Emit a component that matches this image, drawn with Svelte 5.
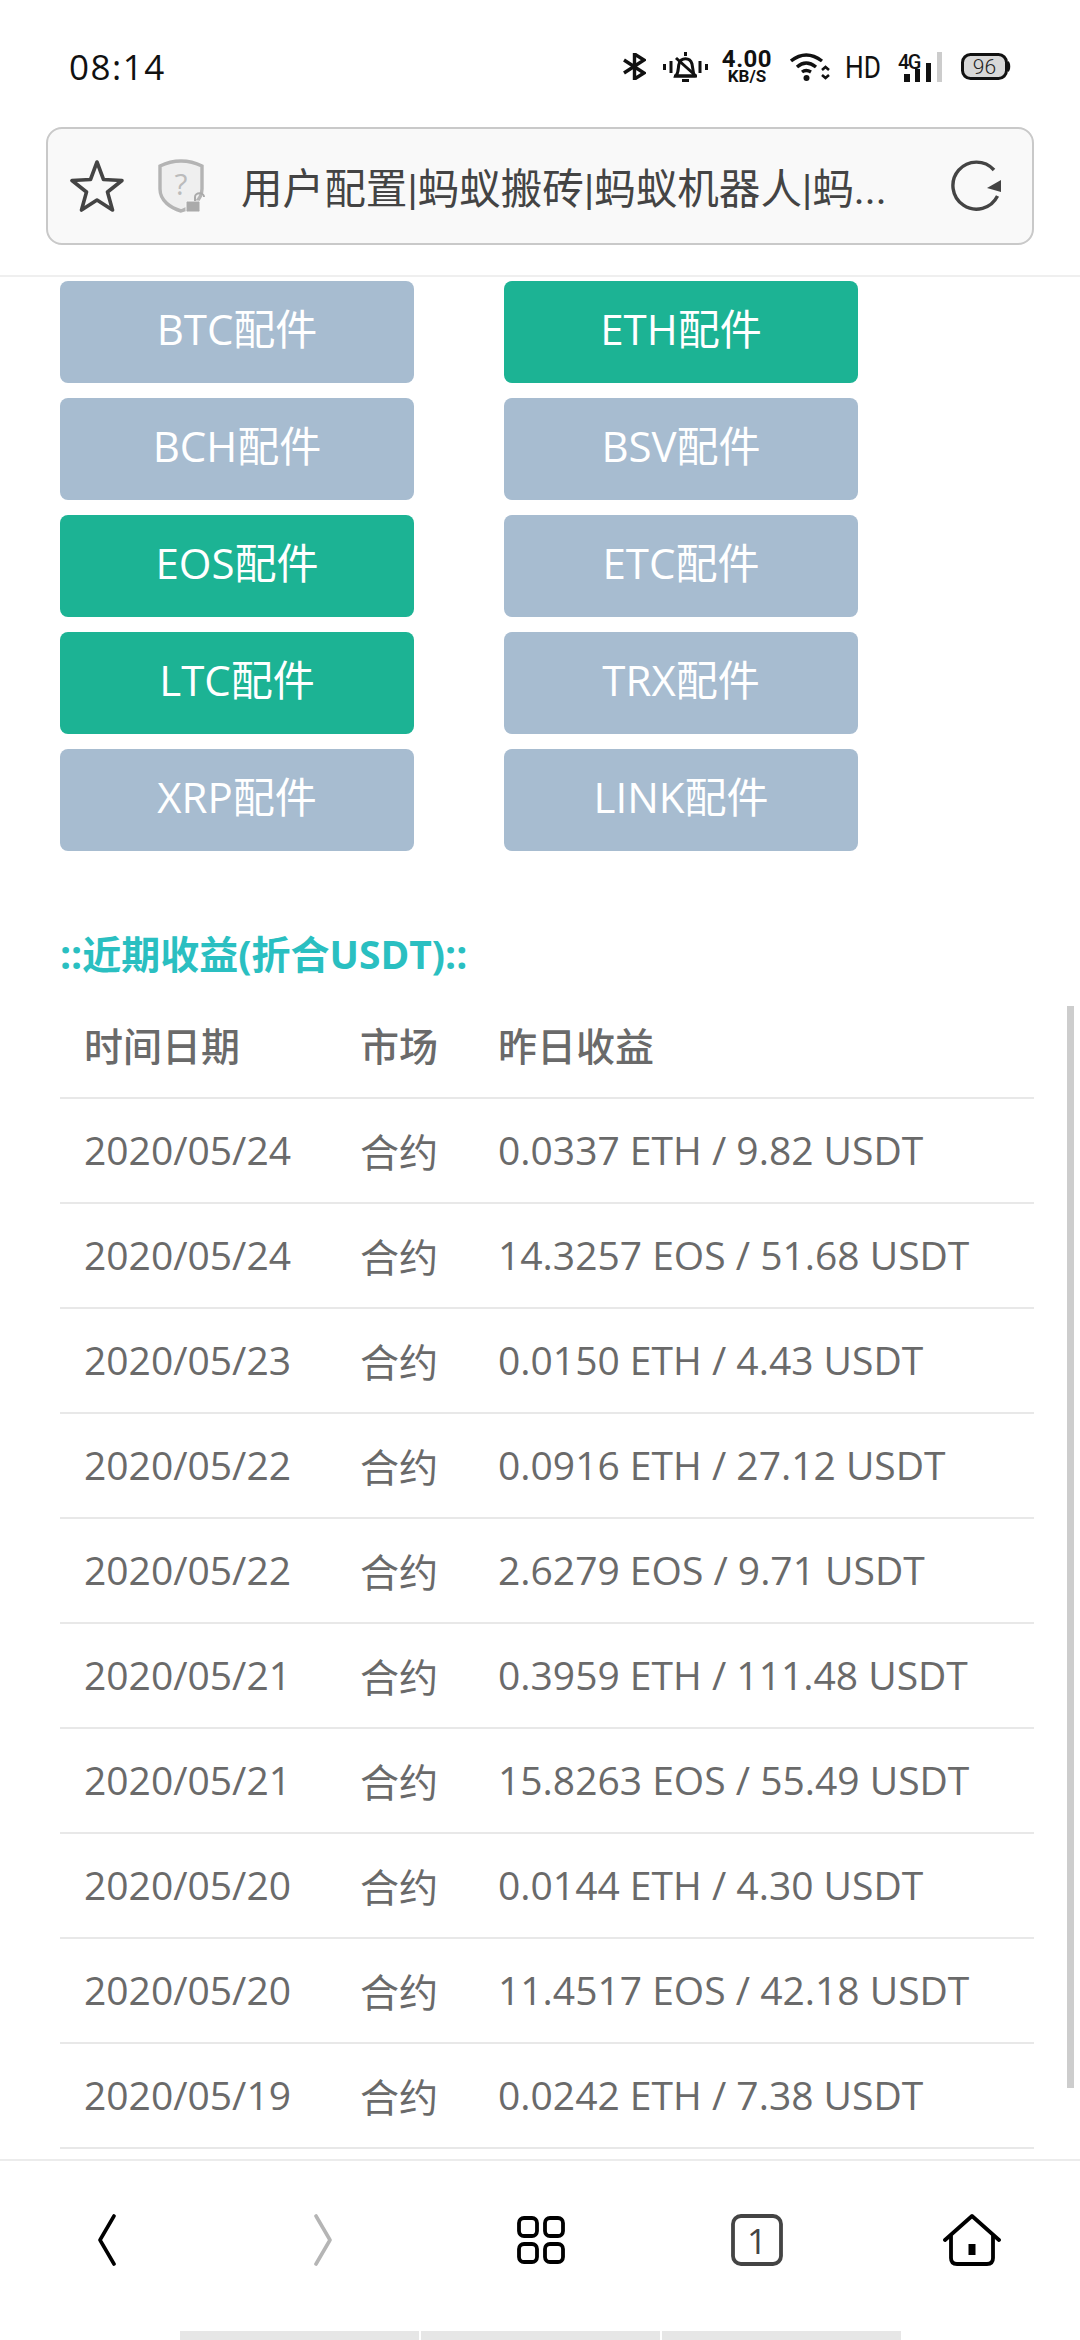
<script lang="ts">
	// Buttons on the config list; "on" ones are green
	const parts = [
		{ name: 'BTC配件', on: false },
		{ name: 'ETH配件', on: true },
		{ name: 'BCH配件', on: false },
		{ name: 'BSV配件', on: false },
		{ name: 'EOS配件', on: true },
		{ name: 'ETC配件', on: false },
		{ name: 'LTC配件', on: true },
		{ name: 'TRX配件', on: false },
		{ name: 'XRP配件', on: false },
		{ name: 'LINK配件', on: false }
	];

	const rows = [
		['2020/05/24', '0.0337 ETH / 9.82 USDT'],
		['2020/05/24', '14.3257 EOS / 51.68 USDT'],
		['2020/05/23', '0.0150 ETH / 4.43 USDT'],
		['2020/05/22', '0.0916 ETH / 27.12 USDT'],
		['2020/05/22', '2.6279 EOS / 9.71 USDT'],
		['2020/05/21', '0.3959 ETH / 111.48 USDT'],
		['2020/05/21', '15.8263 EOS / 55.49 USDT'],
		['2020/05/20', '0.0144 ETH / 4.30 USDT'],
		['2020/05/20', '11.4517 EOS / 42.18 USDT'],
		['2020/05/19', '0.0242 ETH / 7.38 USDT']
	];
</script>

<div class="page">
	<header class="status">
		<span class="time">08:14</span>
		<div class="status-icons">
			<svg width="23" height="27" viewBox="0 0 23 27" fill="none" stroke="#111" stroke-width="3.4">
				<path d="M1 7 L21 20 L11.5 26 V1 L21 7 L1 20" />
			</svg>
			<svg width="45" height="30" viewBox="0 0 45 30" fill="none" stroke="#111" stroke-width="3">
				<path d="M1.5 12 V18 M8 9 V21 M37 9 V21 M43.5 12 V18" />
				<path d="M22.5 0 V4 M13 24 C16 20 15 15 16 12 C18 5 27 5 29 12 L31 24 Z" />
				<path d="M11 24 H34 M19 28.5 H26 M13 6 L33 24" />
			</svg>
			<div class="speed">
				<span class="speed-num">4.00</span>
				<span class="speed-unit">KB/S</span>
			</div>
			<svg width="40" height="30" viewBox="0 0 40 30" fill="none" stroke="#111" stroke-width="3.4">
				<path d="M1 9 Q16 -3 32 9 M7 15 Q16 7 26 15 M12 20 Q16 17 21 20" />
				<circle cx="16.500" cy="26" r="3" fill="#111" stroke="none" />
				<path d="M32 18 L35.500 15 L39 18 M32 23 L35.500 26 L39 23" stroke-width="2.600" />
			</svg>
			<span class="hd">HD</span>
			<svg width="44" height="36" viewBox="0 -3 44 36">
				<text x="0" y="17" class="net">4G</text>
				<rect x="6" y="22" width="6" height="8" fill="#111" />
				<rect x="17" y="17" width="5" height="13" fill="#111" />
				<rect x="28" y="11" width="5" height="19" fill="#111" />
				<rect x="39" y="0" width="5" height="30" fill="#ccc" />
			</svg>
			<svg width="50" height="27" viewBox="0 0 50 27">
				<rect x="1.500" y="1.500" width="44" height="24" rx="8" fill="#d8d8d8" stroke="#111" stroke-width="3" />
				<path d="M47 8 C50 9 50 18 47 19 Z" fill="#111" />
				<text x="23.500" y="21" class="batt" text-anchor="middle">96</text>
			</svg>
		</div>
	</header>

	<div class="toolbar">
		<div class="urlbar">
			<svg class="star" width="54" height="54" viewBox="0 0 54 54" fill="none" stroke="#444" stroke-width="3.600" stroke-linejoin="round">
				<path d="M27 3 L33.500 20.500 L52 21.500 L37.500 33 L42.500 51 L27 41 L11.500 51 L16.500 33 L2 21.500 L20.500 20.500 Z" />
			</svg>
			<svg class="shield" width="48" height="54" viewBox="0 0 48 54">
				<path d="M23 2 C30 2 38 4 44 7 V30 C44 42 32 49 23 52 C13 49 2 42 2 30 V7 C8 4 16 2 23 2 Z" fill="#efefef" stroke="#b4b4b4" stroke-width="3.400" />
				<text x="23" y="36" class="shield-q" text-anchor="middle">?</text>
				<rect x="28" y="42" width="14" height="11" rx="1.500" fill="#aaa" stroke="#f9f9f9" stroke-width="1" />
				<path d="M37 42 V38 C37 33 46 33 46 38" fill="none" stroke="#aaa" stroke-width="2" />
			</svg>
			<span class="title">用户配置|蚂蚁搬砖|蚂蚁机器人|蚂...</span>
			<svg class="reload" width="52" height="52" viewBox="0 0 52 52" fill="none">
				<path d="M46.500 36 A23.500 23.500 0 1 1 43 10" stroke="#444" stroke-width="3.400" />
				<path d="M50 20 L36 28 L50 32 Z" fill="#444" />
			</svg>
		</div>
	</div>

	<main class="content">
		<div class="parts">
			{#each parts as part (part.name)}
				<div class="part" class:on={part.on}>{part.name}</div>
			{/each}
		</div>

		<h2 class="heading">::近期收益(折合USDT)::</h2>

		<table class="earnings">
			<thead>
				<tr>
					<th class="col-date">时间日期</th>
					<th class="col-market">市场</th>
					<th>昨日收益</th>
				</tr>
			</thead>
			<tbody>
				{#each rows as row, i (i)}
					<tr>
						<td>{row[0]}</td>
						<td>合约</td>
						<td>{row[1]}</td>
					</tr>
				{/each}
			</tbody>
		</table>

		<div class="scrollbar"></div>
	</main>

	<nav class="navbar">
		<svg width="18" height="52" viewBox="0 0 18 52" fill="none" stroke="#000" stroke-width="3.600" stroke-linecap="round" stroke-linejoin="round" class="nav-back">
			<path d="M16 2 L2 26 L16 50" />
		</svg>
		<svg width="18" height="52" viewBox="0 0 18 52" fill="none" stroke="#b5b5b5" stroke-width="3.600" stroke-linecap="round" stroke-linejoin="round" class="nav-forward">
			<path d="M2 2 L16 26 L2 50" />
		</svg>
		<svg width="48" height="48" viewBox="0 0 48 48" fill="none" stroke="#000" stroke-width="3.800" class="nav-grid">
			<rect x="2" y="2" width="18" height="18" rx="5" />
			<rect x="28" y="2" width="18" height="18" rx="5" />
			<rect x="2" y="28" width="18" height="18" rx="5" />
			<rect x="28" y="28" width="18" height="18" rx="5" />
		</svg>
		<svg width="52" height="52" viewBox="0 0 52 52" class="nav-tabs">
			<rect x="2" y="2" width="48" height="48" rx="8" fill="none" stroke="#444" stroke-width="3.800" />
			<text x="26" y="40" class="tab-count" text-anchor="middle">1</text>
		</svg>
		<svg width="58" height="52" viewBox="0 0 58 52" fill="none" stroke="#000" stroke-width="3.800" stroke-linejoin="round" stroke-linecap="round" class="nav-home">
			<path d="M2 26 L29 2 L56 26" />
			<path d="M8 22 V44 C8 48 10 50 14 50 H44 C48 50 50 48 50 44 V22" />
			<rect x="25.500" y="30" width="7" height="11" fill="#000" stroke="none" />
		</svg>
	</nav>

	<div class="gesture">
		<span></span>
		<span></span>
		<span></span>
	</div>
</div>

<style>
	:global(body) {
		margin: 0;
		background: #fff;
	}

	.page {
		position: relative;
		display: flex;
		flex-direction: column;
		width: 1080px;
		height: 2340px;
		overflow: hidden;
		background: #fff;
		font-family: 'Open Sans', 'Noto Sans CJK SC', sans-serif;
	}

	.status {
		display: flex;
		align-items: center;
		flex: none;
		height: 127px;
		box-sizing: border-box;
		padding: 6px 69px 0 69px;
		color: #111;
	}

	.time {
		font-size: 35px;
		letter-spacing: 1.5px;
	}

	.status-icons {
		display: flex;
		align-items: center;
		margin-left: auto;
	}

	.status-icons > :nth-child(1) {
		margin-right: 17px;
	}

	.status-icons > :nth-child(2) {
		margin-right: 15px;
	}

	.status-icons > :nth-child(3) {
		margin-right: 19px;
	}

	.status-icons > :nth-child(4) {
		margin-right: 15px;
	}

	.status-icons > :nth-child(5) {
		margin-right: 18px;
	}

	.status-icons > :nth-child(6) {
		margin-right: 19px;
	}

	.speed {
		display: flex;
		flex-direction: column;
		align-items: center;
		width: 48px;
		font-family: Roboto, sans-serif;
		font-weight: 700;
	}

	.speed-num {
		font-size: 24px;
		line-height: 20px;
		letter-spacing: 0.5px;
	}

	.speed-unit {
		font-size: 17px;
		line-height: 15px;
	}

	.hd {
		width: 35px;
		font-family: Roboto, sans-serif;
		font-size: 32px;
		line-height: 30px;
		color: #111;
		transform: scaleX(0.82);
		transform-origin: left center;
	}

	.net {
		font-family: Roboto, sans-serif;
		font-size: 20px;
		font-weight: 500;
		letter-spacing: -1.5px;
		fill: #111;
	}

	.batt {
		font-family: Roboto, sans-serif;
		font-size: 21px;
		font-weight: 300;
		fill: #222;
	}

	.toolbar {
		flex: none;
		height: 150px;
		box-sizing: border-box;
		padding: 0 46px;
		border-bottom: 2px solid #efefef;
	}

	.urlbar {
		display: flex;
		align-items: center;
		height: 118px;
		box-sizing: border-box;
		padding: 0 29px 0 22px;
		background: #f9f9f9;
		border: 2px solid #c9c9c9;
		border-radius: 16px;
	}

	.shield {
		margin-left: 34px;
	}

	.title {
		margin-left: 35px;
		font-family: Roboto, 'Noto Sans CJK SC', sans-serif;
		font-size: 41.6px;
		color: #444;
		white-space: nowrap;
	}

	.reload {
		margin-left: auto;
	}

	.content {
		position: relative;
		flex: 1;
		min-height: 0;
		overflow: hidden;
		padding: 4px 46px 0 60px;
	}

	.parts {
		display: grid;
		grid-template-columns: 354px 354px;
		grid-auto-rows: 102px;
		gap: 15px 90px;
	}

	.part {
		display: flex;
		align-items: center;
		justify-content: center;
		padding-bottom: 12px;
		box-sizing: border-box;
		background: #a7bcd0;
		border-radius: 8px;
		color: #fff;
		font-size: 42px;
	}

	.part.on {
		background: #1cb394;
	}

	.heading {
		margin: 76px 0 0;
		font-size: 39px;
		line-height: 54px;
		font-weight: 700;
		color: #2abfc1;
	}

	.earnings {
		width: 974px;
		margin-top: 9px;
		border-collapse: collapse;
		table-layout: fixed;
		color: #6a6a6a;
		font-size: 39px;
	}

	.earnings th,
	.earnings td {
		height: 105px;
		box-sizing: border-box;
		padding: 0 0 0 24px;
		border-bottom: 2px solid #e8e8e8;
		text-align: left;
		font-weight: 400;
		white-space: nowrap;
	}

	.earnings td {
		padding-bottom: 2px;
	}

	.earnings th {
		font-weight: 500;
		height: 108px;
	}

	.col-date {
		width: 276px;
	}

	.col-market {
		width: 138px;
	}

	.scrollbar {
		position: absolute;
		top: 729px;
		right: 6px;
		width: 7px;
		height: 1082px;
		background: #cdcdcd;
	}

	.navbar {
		position: relative;
		flex: none;
		display: flex;
		align-items: center;
		height: 172px;
		box-sizing: border-box;
		padding: 0 79px 12px 98px;
		border-top: 2px solid #ececec;
		background: #fff;
	}

	.nav-forward {
		margin-left: 198px;
	}

	.nav-grid {
		margin-left: 185px;
	}

	.nav-tabs {
		margin-left: 166px;
	}

	.nav-home {
		margin-left: auto;
	}

	.tab-count {
		font-family: 'Open Sans', sans-serif;
		font-size: 35px;
		fill: #444;
	}

	.shield-q {
		font-family: 'Open Sans', sans-serif;
		font-size: 30px;
		fill: #bbb;
	}

	.gesture {
		flex: none;
		display: flex;
		justify-content: center;
		gap: 2px;
		height: 9px;
		background: #fff;
	}

	.gesture span {
		width: 239px;
		background: #e6e6e6;
	}
</style>
